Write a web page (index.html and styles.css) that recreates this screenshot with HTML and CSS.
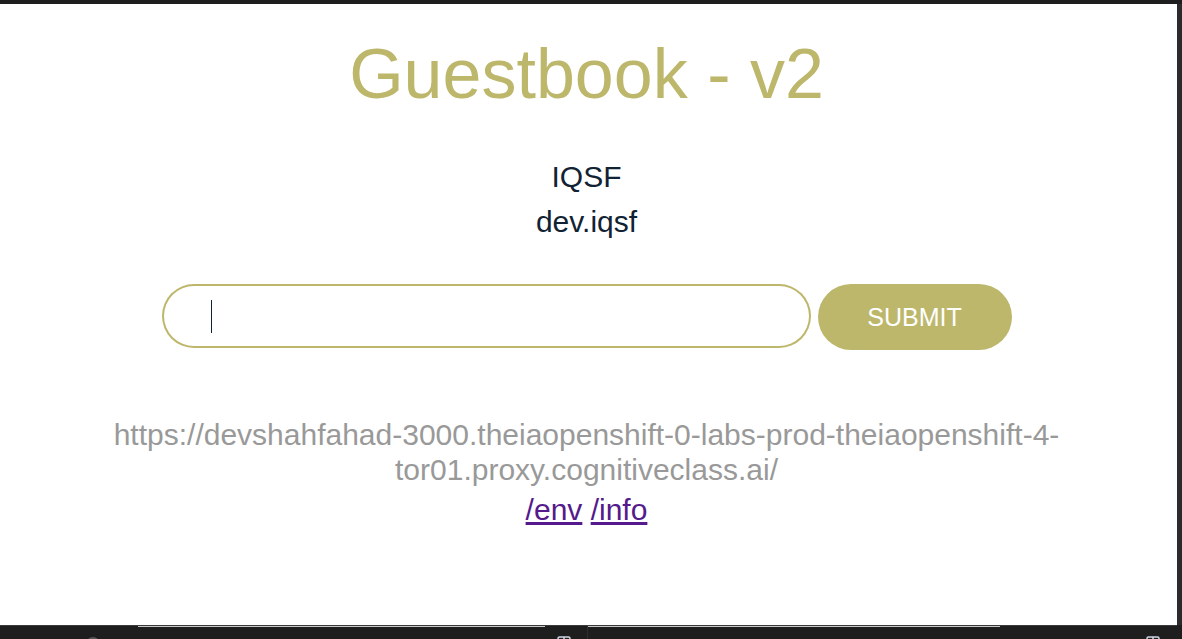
FILE: index.html
```html
<!DOCTYPE html>
<html lang="en">
<head>
<meta charset="utf-8">
<title>Guestbook - v2</title>
<link rel="stylesheet" href="styles.css">
</head>
<body>
<div class="topbar"></div>
<div class="middle">
  <main class="page">
    <div class="header">
      <h1>Guestbook - v2</h1>
    </div>
    <div class="entries">
      <p>IQSF</p>
      <p>dev.iqsf</p>
    </div>
    <div class="form-wrap">
      <form class="gb-form">
        <span class="field">
          <input class="entry" type="text" autocomplete="off">
          <span class="caret"></span>
        </span>
        <a href="#" class="submit">Submit</a>
      </form>
    </div>
    <div class="host">
      <h2>https://devshahfahad-3000.theiaopenshift-0-labs-prod-theiaopenshift-4-tor01.proxy.cognitiveclass.ai/</h2>
      <p class="links"><a href="env">/env</a> <a href="info">/info</a></p>
    </div>
  </main>
  <div class="rborder"></div>
</div>
<div class="bottombar">
  <div class="half left">
    <span class="dot"></span>
    <span class="tabline tl1"></span>
    <svg class="ic" width="14" height="14" viewBox="0 0 14 14"><rect x="1" y="1" width="12" height="12" rx="1.5" fill="none" stroke="#cfd8e6" stroke-width="1.5"/><line x1="7" y1="1" x2="7" y2="13" stroke="#cfd8e6" stroke-width="1.5"/><line x1="1" y1="5" x2="13" y2="5" stroke="#cfd8e6" stroke-width="1.5"/></svg>
  </div>
  <div class="half right">
    <span class="tabline tl2"></span>
    <svg class="ic ic2" width="14" height="14" viewBox="0 0 14 14"><rect x="1" y="1" width="12" height="12" rx="1.5" fill="none" stroke="#cfd8e6" stroke-width="1.5"/><line x1="7" y1="1" x2="7" y2="13" stroke="#cfd8e6" stroke-width="1.5"/><line x1="1" y1="5" x2="13" y2="5" stroke="#cfd8e6" stroke-width="1.5"/></svg>
  </div>
</div>
</body>
</html>
```
FILE: styles.css
```css
html, body {
  margin: 0;
  padding: 0;
}
body {
  width: 1182px;
  height: 639px;
  overflow: hidden;
  background: #1e1e1e;
  font-family: "Liberation Sans", Arial, sans-serif;
  color: #112233;
}
.topbar {
  height: 4px;
  background: #1e1e1e;
}
.middle {
  display: flex;
  height: 621px;
}
.page {
  box-sizing: border-box;
  width: 1177px;
  height: 621px;
  padding-right: 4px;
  background: #ffffff;
  overflow: hidden;
  text-align: center;
}
.rborder {
  width: 5px;
  background: #2b2b2b;
}
.header {
  padding: 30px 0 20px;
}
h1 {
  margin: 0;
  font-size: 70px;
  line-height: 80px;
  font-weight: 400;
  color: #bdb76b;
}
.entries {
  padding: 20px 0;
}
.entries p {
  margin: 0;
  font-size: 30px;
  line-height: 45px;
}
.form-wrap {
  padding: 20px 0 0;
}
.gb-form {
  display: flex;
  justify-content: center;
  align-items: flex-start;
  gap: 7px;
}
.field {
  position: relative;
  display: block;
}
.entry {
  display: block;
  box-sizing: border-box;
  width: 649px;
  height: 64px;
  margin: 0;
  padding: 0 50px;
  border: 0;
  border-radius: 1000px;
  box-shadow: inset 0 0 0 2px #bdb76b;
  font-family: inherit;
  font-size: 30px;
  color: #112233;
  outline: none;
  background: #fff;
}
.caret {
  position: absolute;
  left: 49px;
  top: 16px;
  width: 1px;
  height: 33px;
  background: #112233;
}
.submit {
  display: block;
  box-sizing: border-box;
  width: 194px;
  height: 66px;
  line-height: 66px;
  border-radius: 1000px;
  background: #bdb76b;
  color: #ffffff;
  font-size: 25px;
  text-decoration: none;
  text-transform: uppercase;
}
.host {
  padding-top: 68px;
}
h2 {
  margin: 0;
  font-size: 30px;
  line-height: 34.5px;
  font-weight: 400;
  color: #999999;
}
.links {
  margin: 0;
  font-size: 30px;
  line-height: 45px;
}
.links a {
  color: #551a8b;
  text-decoration: underline;
}
.bottombar {
  display: flex;
  height: 14px;
  border-top: 1px solid #3a3a3a;
  box-sizing: border-box;
  background: #1e1e1e;
  overflow: hidden;
  width: 1177px;
}
.half {
  display: flex;
  align-items: flex-start;
  height: 14px;
}
.left {
  width: 587px;
  border-right: 1px solid #2e2e2e;
}
.right {
  flex: 1;
}
.tabline {
  display: block;
  height: 1px;
  background: #c8c8c8;
}
.dot {
  display: block;
  width: 14px;
  height: 14px;
  margin: 11px 0 0 86px;
  border-radius: 50%;
  background: #555;
}
.tl1 {
  width: 407px;
  margin-left: 38px;
}
.tl2 {
  width: 412px;
  margin-left: 0;
}
.ic {
  display: block;
  margin: 10px 0 0 12px;
}
.ic2 {
  margin-left: 146px;
}
```
